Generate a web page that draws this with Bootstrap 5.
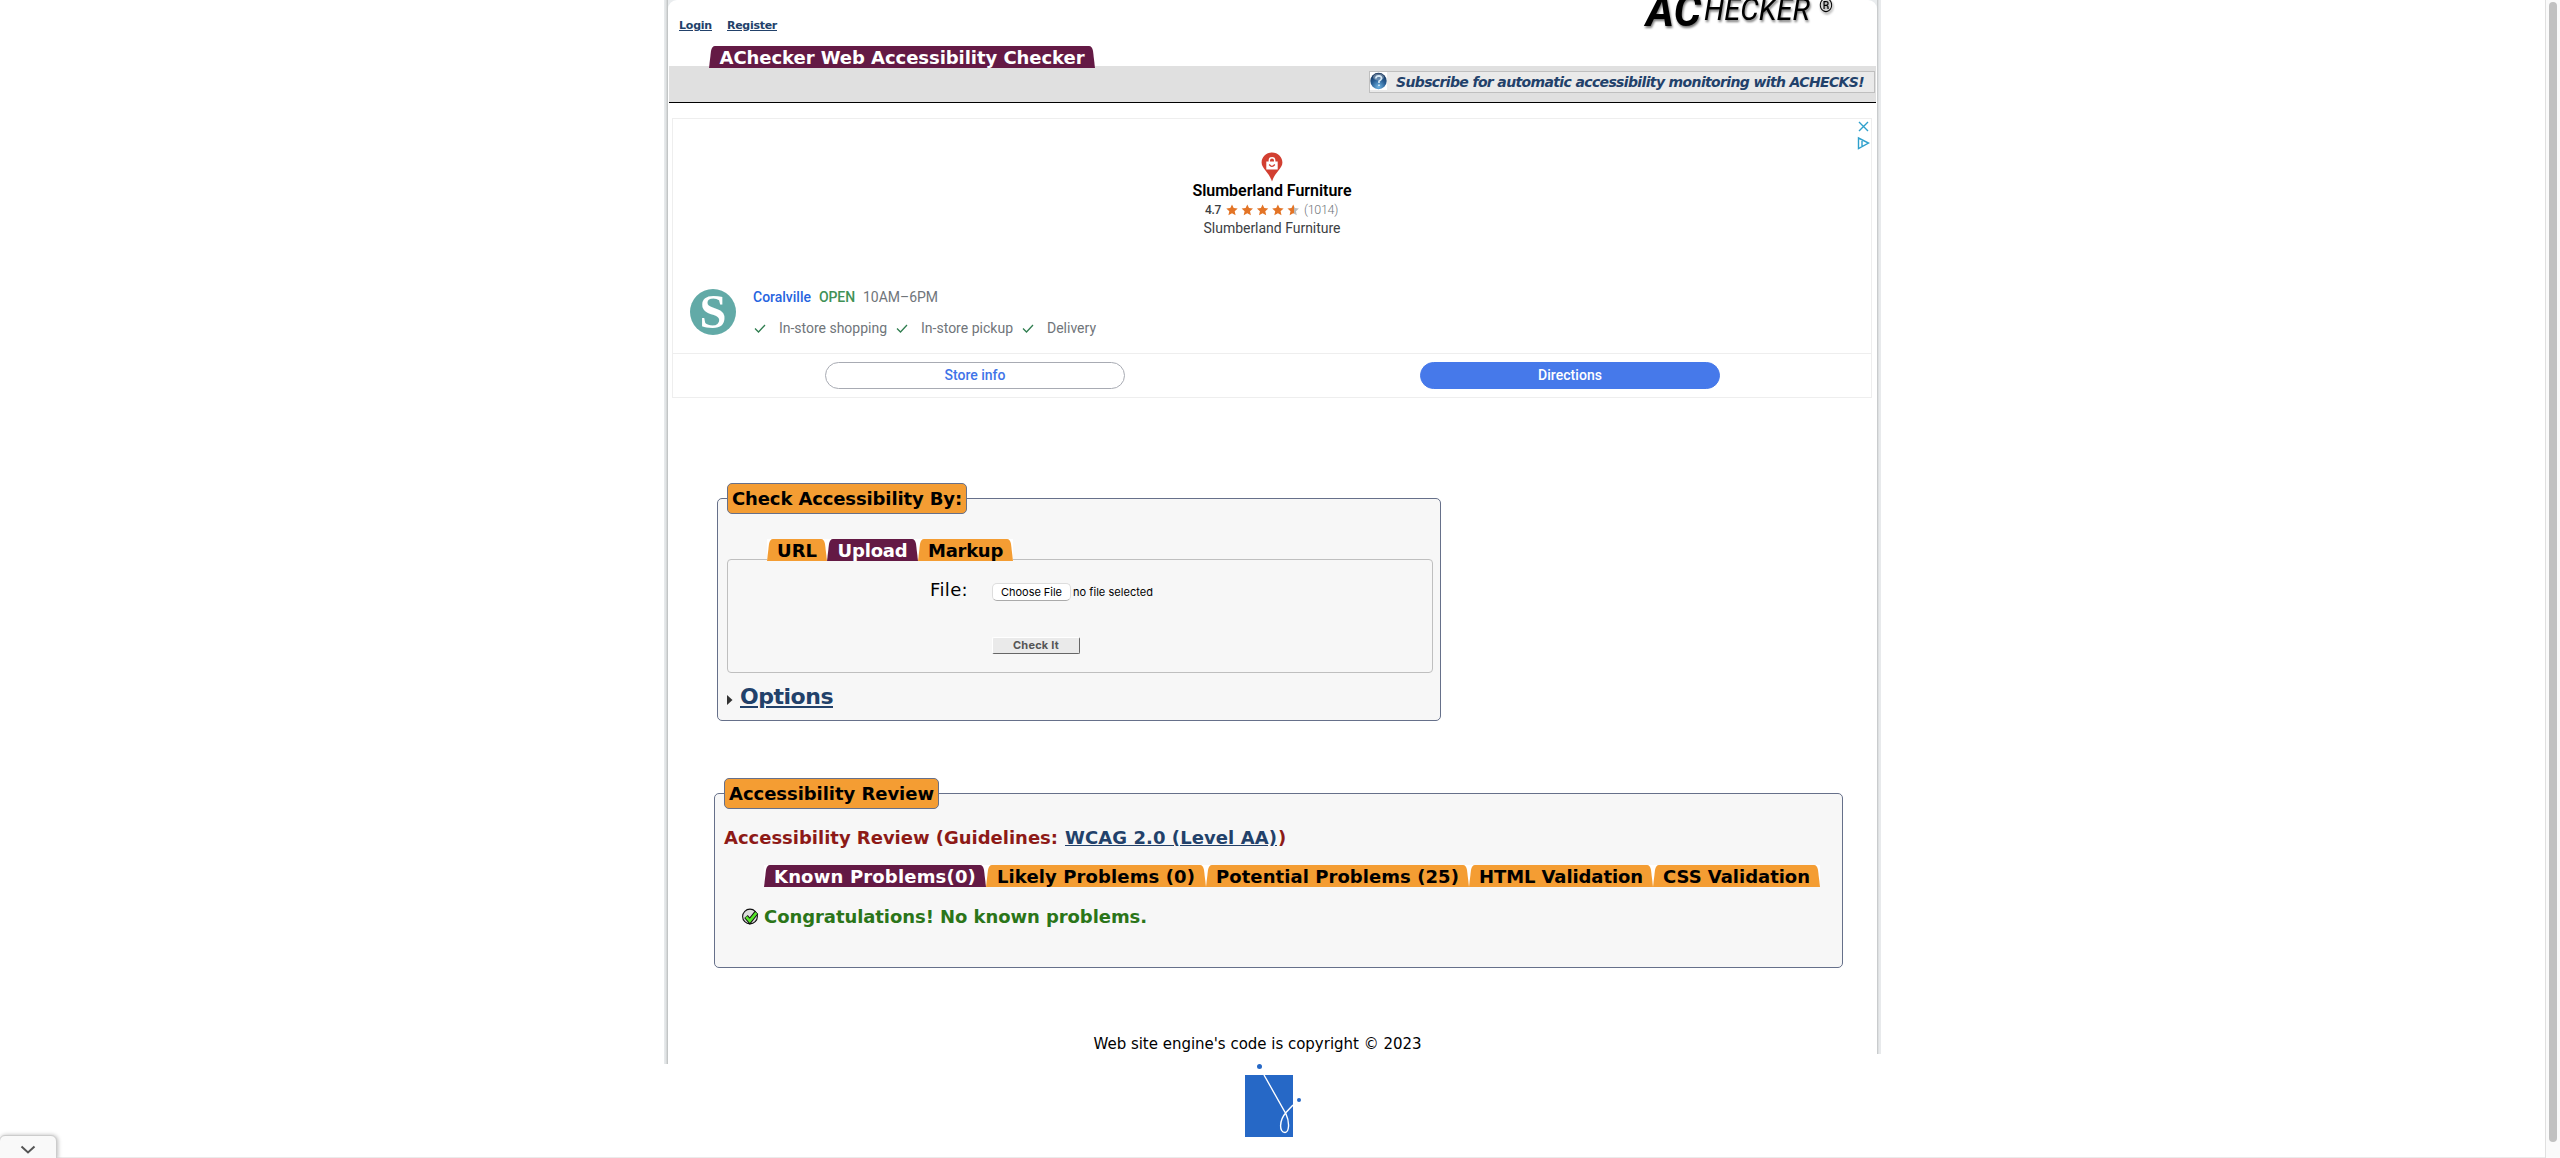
<!DOCTYPE html>
<html lang="en">
<head>
<meta charset="utf-8">
<title>AChecker Web Accessibility Checker</title>
<link href="https://cdn.jsdelivr.net/npm/bootstrap@5.3.0/dist/css/bootstrap.min.css" rel="stylesheet">
<style>
html{overflow:hidden}
body{height:1158px;overflow:hidden;font-family:"DejaVu Sans",sans-serif;color:#000;background:#fff;line-height:20px;font-size:16px}
.vb{font-family:"DejaVu Sans",sans-serif;font-weight:700;white-space:nowrap}
.txt{display:inline-block;white-space:nowrap}
a{color:#22416a}
.page-shell{width:1217px;margin-left:664px;height:1064px;background:linear-gradient(90deg,#e9ecee,#dfe2e3 2px,#b9bcbc 4px) 0 0/4px 1064px no-repeat,linear-gradient(90deg,#bfc2c3,#e8eaec 2px,#e8eaec) 1213px 0/4px 1054px no-repeat,linear-gradient(#e9ecee,#e9ecee) 0 0/100% 9px no-repeat}
.page-inner{margin:0 4px;width:1209px;border-radius:9px 9px 0 0;background:#fff;height:1064px}
.site-head{height:66px}
.user-links{font-size:11px;padding:16px 0 0 11px;gap:15px;height:46px}
.tabx{position:relative;height:22px;background:#fff;z-index:1;text-align:center}
.tabx svg{position:absolute;inset:0;width:100%;height:100%}
.tabx .vb{position:relative;line-height:24px}
.site-logo{width:196px;height:40px;margin-right:42px}
.subbar{height:37px;background:#e0e0e0;border-bottom:1px solid #000;margin-left:1px;width:1207px}
.subscribe{border:1px solid #bfbfbf;background:#eaeaea;width:506px;height:22px;font-style:italic;font-size:14px;margin:5px 1px 0 0}
.ad-unit{font-family:Roboto,sans-serif;width:1200px;height:280px;margin:15px 0 0 4px;border:1px solid #eee;font-size:14px;color:#70757a}
.ad-controls{right:0;top:1px}
.ad-top{height:168px}
.ad-mid{height:67px;border-bottom:1px solid #eee;padding-left:17px}
.pill{width:300px;height:27px;border-radius:14px;font-weight:500;padding:0;line-height:25px;border:1px solid #a8abb3;color:#3f74e8;background:#fff;text-align:center}
.pill-fill{background:#4679ea;border-color:#4679ea;color:#fff}
.panelx{border:1px solid #66708a;border-radius:5px;background:#f7f7f7;position:relative}
.legendx{position:absolute;border:1px solid #66708a;border-radius:5px;background:#f49d33;display:flex;align-items:center;justify-content:center}
.formbox{border:1px solid #bfbfbf;border-radius:4px;width:706px;height:114px;margin:-2px 0 0 9px}
.choose{font-family:Inter,sans-serif;background:#fff;border:1px solid #ddd;border-bottom-color:#aaa;border-radius:5px;width:79px;height:18px;font-size:11px;line-height:15px;text-align:center;padding:0}
.checkit{font-family:Inter,sans-serif;font-weight:700;font-size:11px;color:#555;background:#eaeaea;border:1px solid #fff;border-right-color:#666;border-bottom-color:#666;border-radius:2px;width:88px;height:17px;line-height:15px;padding:0}
.corner-tab{position:absolute;left:-1px;top:1135px;width:58px;height:24px;background:#f9f9f9;border:1px solid #ccc;border-radius:6px 6px 0 0;box-shadow:1px 0 4px #bbb}
.scroll-track{position:absolute;right:0;top:0;width:15px;height:1158px;background:#fafafa;border-left:1px solid #e0e0e0}
.scroll-thumb{width:8px;height:1140px;border-radius:4px;background:#c1c1c1;margin:2px 0 0 3px}
.bottom-line{position:absolute;left:57px;right:0;top:1157px;height:1px;background:#ebebeb}
</style>
<script src="https://cdn.jsdelivr.net/npm/bootstrap@5.3.0/dist/js/bootstrap.bundle.min.js"></script>
</head>
<body class="position-relative">
<div class="page-shell"><div class="page-inner d-flex flex-column">
<header class="site-head d-flex justify-content-between">
 <div>
  <div class="user-links d-flex vb"><a href="#" data-w="33">Login</a><a href="#" data-w="50">Register</a></div>
  <div class="tabx text-white" data-tab="#641a45" style="width:386px;margin-left:41px"><span class="vb fit" data-w="365" data-s="18">AChecker Web Accessibility Checker</span></div>
 </div>
 <svg class="site-logo" viewBox="0 0 196 40" font-family="Roboto,sans-serif" font-style="italic"><g style="filter:drop-shadow(1.5px 2px 1px #777)"><text x="7" y="26" font-size="44" font-weight="700" textLength="55" lengthAdjust="spacingAndGlyphs">AC</text><text x="65" y="20" font-size="32" textLength="106" lengthAdjust="spacingAndGlyphs">HECKER</text><text x="180" y="12" font-size="18" font-style="normal" textLength="14" lengthAdjust="spacingAndGlyphs">®</text></g></svg>
</header>
<div class="subbar d-flex justify-content-end">
 <div class="subscribe d-flex vb"><span class="d-flex bg-white" style="width:17px;height:18px"><svg width="17" height="18"><defs><radialGradient id="q" cx=".5" cy=".85" r=".8"><stop offset="0" stop-color="#71b5e4"/><stop offset=".55" stop-color="#285e94"/><stop offset="1" stop-color="#17365d"/></radialGradient></defs><circle cx="8.5" cy="9" r="8.2" fill="url(#q)"/><ellipse cx="8.5" cy="5" rx="5.5" ry="3.5" fill="#fff" opacity=".3"/><path d="M5.800 6.500Q6 3.800 8.800 3.800 11.700 4 11.500 6.500 11.300 8 9 9.300V11M9 12.500V14" fill="none" stroke="#d5e8f5" stroke-width="1.700"/></svg></span><a href="#" class="text-decoration-none fit" data-w="468" data-s="14" style="margin-left:9px">Subscribe for automatic accessibility monitoring with ACHECKS!</a></div>
</div>
<section class="ad-unit position-relative">
 <svg class="position-absolute ad-controls" width="14" height="30" fill="none" stroke="#2fa0cc" stroke-width="1.4"><path d="M2 2l9 9M11 2l-9 9M1.500 18v10.500l10-5.500z M5 21v5"/></svg>
 <div class="ad-top d-flex flex-column align-items-center text-black">
  <svg width="22" height="30" style="margin-top:33px;flex:none"><path d="M11 .5C5 .5.6 5 .6 10.600c0 6 6.900 9 10.400 18.900 3.500-9.900 10.400-12.900 10.400-18.900C21.400 5 17 .5 11 .5z" fill="#d23f31"/><path d="M5.300 9.500h11.400v8H5.300z" fill="#fff"/><path d="M8.300 10V8.500a2.700 2.700 0 0 1 5.400 0V10" fill="none" stroke="#fff" stroke-width="1.400"/><path d="M8.200 12.500q2.800 3.800 5.600 0" fill="none" stroke="#d23f31" stroke-width="1.300"/></svg>
  <span class="txt fit" data-w="159" data-s="16" style="font-weight:600;height:19px;line-height:18px">Slumberland Furniture</span>
  <div class="d-flex align-items-center" style="height:18px;margin-left:-1px"><span class="fit txt" data-w="16" data-s="12" style="font-weight:500;color:#3c4043">4.7</span><svg id="stars" width="77" height="14" style="margin:0 2px 0 3px"></svg><span class="fit txt" data-w="34" data-s="12.5" style="color:#70757a;font-weight:300;margin-left:1px">(1014)</span></div>
  <span class="txt fit" data-w="137" data-s="14" style="color:#3c4043;line-height:19px">Slumberland Furniture</span>
 </div>
 <div class="ad-mid d-flex"><svg width="46" height="46" style="margin-top:2px"><circle cx="23" cy="23" r="23" fill="#62aaa7"/><text x="23" y="39" text-anchor="middle" font-family="Liberation Serif,serif" font-weight="700" font-size="49" fill="#fff" textLength="27" lengthAdjust="spacingAndGlyphs">S</text></svg>
  <div style="margin-left:17px"><div class="d-flex" style="height:31px;gap:8px"><b class="fit txt" style="font-weight:500;color:#2664df" data-w="58" data-s="14">Coralville</b><b class="fit txt" style="font-weight:500;color:#409156" data-w="36" data-s="14">OPEN</b><span class="fit txt" data-w="75" data-s="14">10AM–6PM</span></div>
  <div class="d-flex"><svg class="ck" width="26" height="20"></svg><span class="fit txt" data-w="108" data-s="14">In-store shopping</span><svg class="ck" width="34" height="20"></svg><span class="fit txt" data-w="92" data-s="14">In-store pickup</span><svg class="ck" width="34" height="20"></svg><span class="fit txt" data-w="49" data-s="14">Delivery</span></div></div>
 </div>
 <div class="d-flex" style="padding:8px 0 0 152px;gap:295px"><div class="pill"><span class="fit txt" data-w="61" data-s="14">Store info</span></div><div class="pill pill-fill"><span class="fit txt" data-w="64" data-s="14">Directions</span></div></div>
</section>
<section class="panelx" style="width:724px;height:223px;margin:100px 0 0 49px">
 <div class="legendx vb" style="left:9px;top:-16px;width:240px;height:31px"><span class="fit" data-w="230" data-s="18">Check Accessibility By:</span></div>
 <div class="d-flex" style="padding:40px 0 0 49px">
  <div class="tabx" data-tab="#f49d33" style="width:60px"><span class="vb fit" data-w="40" data-s="18">URL</span></div>
  <div class="tabx text-white" data-tab="#641a45" style="width:91px"><span class="vb fit" data-w="70" data-s="18">Upload</span></div>
  <div class="tabx" data-tab="#f49d33" style="width:95px"><span class="vb fit" data-w="75" data-s="18">Markup</span></div>
 </div>
 <div class="formbox"><div class="d-flex" style="padding:20px 0 0 202px"><span class="fit txt" data-w="38" data-s="18">File:</span><button class="choose" style="margin:3px 2px 0 24px"><span class="fit txt" data-w="61" data-s="11">Choose File</span></button><span class="fit txt" data-w="80" data-s="11" style="font-family:Inter,sans-serif;font-size:11px;margin-top:2px">no file selected</span></div>
 <button class="checkit d-block" style="margin:35px 0 0 264px"><span class="fit txt" data-w="46" data-s="11">Check It</span></button></div>
 <div class="d-flex align-items-center" style="padding:14px 0 0 9px"><svg width="6" height="10" style="margin:5px 7px 0 0"><path d="M0 0l5.500 5L0 10z" fill="#333"/></svg><a href="#" class="vb fit" data-w="93" data-s="22">Options</a></div>
</section>
<section class="panelx" style="width:1129px;height:175px;margin:72px 0 0 46px">
 <div class="legendx vb" style="left:9px;top:-16px;width:215px;height:31px"><span class="fit" data-w="205" data-s="18">Accessibility Review</span></div>
 <h3 class="vb m-0 d-flex" style="padding:34px 0 0 9px;height:62px;color:#8d1a17;font-size:18px;line-height:20px"><span class="fit" data-w="334" data-s="18">Accessibility Review (Guidelines:</span><a href="#" class="fit" data-w="212" data-s="18" style="margin-left:7px">WCAG 2.0 (Level AA)</a><span class="fit" data-w="8" data-s="18" style="margin-left:1px">)</span></h3>
 <div class="d-flex" style="padding:9px 0 0 49px">
  <div class="tabx text-white" data-tab="#641a45" style="width:222px"><span class="vb fit" data-w="202" data-s="18">Known Problems(0)</span></div>
  <div class="tabx" data-tab="#f49d33" style="width:220px"><span class="vb fit" data-w="198" data-s="18">Likely Problems (0)</span></div>
  <div class="tabx" data-tab="#f49d33" style="width:263px"><span class="vb fit" data-w="243" data-s="18">Potential Problems (25)</span></div>
  <div class="tabx" data-tab="#f49d33" style="width:184px"><span class="vb fit" data-w="164" data-s="18">HTML Validation</span></div>
  <div class="tabx" data-tab="#f49d33" style="width:167px"><span class="vb fit" data-w="147" data-s="18">CSS Validation</span></div>
 </div>
 <div class="d-flex vb" style="padding:20px 0 0 27px;color:#2b7519"><svg width="17" height="18" style="margin:1px 5px 0 0"><circle cx="8" cy="8.500" r="7.400" fill="#ddd" stroke="#111" stroke-width="1.100"/><path d="M4 8.500l3.800 4.500 6.700-8.500" fill="none" stroke="#111" stroke-width="4.600"/><path d="M4.200 8.800l3.600 4 6.500-8" fill="none" stroke="#55e629" stroke-width="2.700"/></svg><span class="fit" data-w="383" data-s="18">Congratulations! No known problems.</span></div>
</section>
<footer class="text-center" style="margin-top:66px;padding-right:30px"><span class="fit txt" data-w="328" data-s="15">Web site engine's code is copyright © 2023</span></footer>
</div></div>
<svg class="position-absolute" style="left:1240px;top:1060px" width="70" height="80"><path fill="#2668c6" d="M5 15h48v62H5z"/><circle cx="19.500" cy="6.500" r="2.500" fill="#2668c6"/><circle cx="59" cy="40" r="2" fill="#2668c6"/><path d="M24 15l22 39c4 9 3 18-1 18.500-6 0-6-12 1-20l7-7.500" fill="none" stroke="#fff" stroke-width="1.400"/></svg>
<div class="bottom-line"></div>
<div class="corner-tab"><svg width="56" height="23"><path d="M21.500 10.500l6.500 6 6.500-6" fill="none" stroke="#555" stroke-width="2"/></svg></div>
<div class="scroll-track"><div class="scroll-thumb"></div></div>
<script>
// Tab backgrounds with slanted sides and rounded shoulders
document.querySelectorAll('.tabx').forEach(t=>{
  const w=t.offsetWidth,h=t.offsetHeight;
  t.insertAdjacentHTML('afterbegin',`<svg><path fill="${t.dataset.tab}" d="M0 ${h}L2 5Q3 0 6 0H${w-6}Q${w-3} 0 ${w-2} 5L${w} ${h}z"/></svg>`);
});
// Check marks and rating stars
document.querySelectorAll('.ck').forEach((s,i)=>{const x=i?10:2;s.innerHTML=`<path d="M${x} 10.500l3.500 3.500 6.500-7" fill="none" stroke="#2f7d4f" stroke-width="1.300"/>`;});
const star='M0-5.600l1.700 3.700 4 .4-3 2.700.9 4L0 3.200-3.600 5.200l.9-4-3-2.700 4-.4z';
document.getElementById('stars').innerHTML='<defs><linearGradient id="hs"><stop offset=".55" stop-color="#e37426"/><stop offset=".55" stop-color="#bbb"/></linearGradient></defs>'+[0,1,2,3,4].map(i=>`<path transform="translate(${8+i*15.3} 7)" fill="${i==4?'url(#hs)':'#e37426'}" d="${star}"/>`).join('');
// Fit each label to its column width through letter spacing
document.querySelectorAll('[data-w]').forEach(e=>{
  if(e.dataset.s)e.style.fontSize=e.dataset.s+'px';
  e.style.display='inline-block';e.style.whiteSpace='nowrap';
  const n=e.textContent.length,w=e.getBoundingClientRect().width;
  e.style.letterSpacing=(+e.dataset.w-w)/n+'px';
});
</script>
</body>
</html>
